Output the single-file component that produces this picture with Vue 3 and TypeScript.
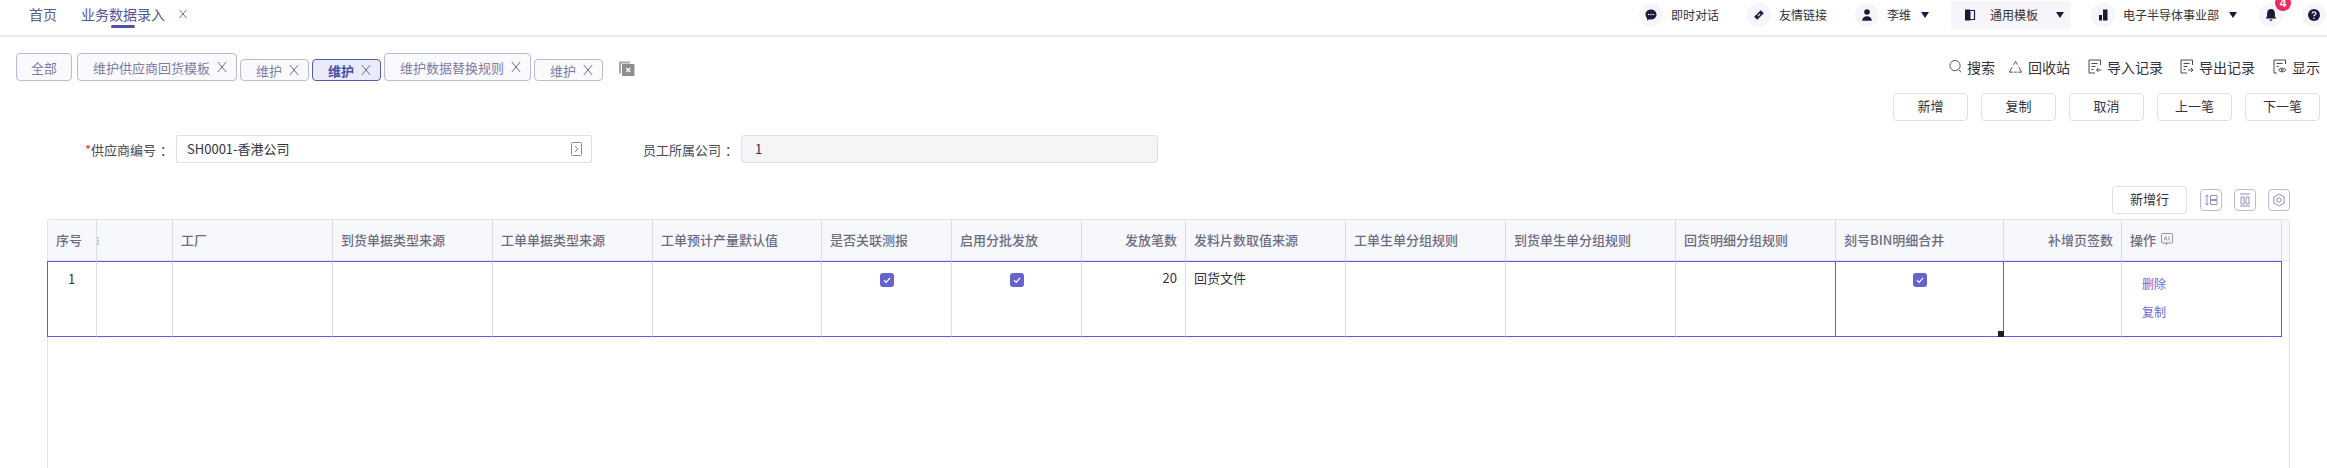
<script setup lang="ts">
type Col = { title: string; width: number; align?: 'right' }

const tags = [
  { label: '维护供应商回货模板', tall: true },
  { label: '维护' },
  { label: '维护', active: true },
  { label: '维护数据替换规则', tall: true },
  { label: '维护' },
]

const actions = ['新增', '复制', '取消', '上一笔', '下一笔']

const columns: Col[] = [
  { title: '序号', width: 49 },
  { title: '', width: 76 },
  { title: '工厂', width: 160 },
  { title: '到货单据类型来源', width: 160 },
  { title: '工单单据类型来源', width: 160 },
  { title: '工单预计产量默认值', width: 169 },
  { title: '是否关联测报', width: 130 },
  { title: '启用分批发放', width: 130 },
  { title: '发放笔数', width: 104, align: 'right' },
  { title: '发料片数取值来源', width: 160 },
  { title: '工单生单分组规则', width: 160 },
  { title: '到货单生单分组规则', width: 170 },
  { title: '回货明细分组规则', width: 160 },
  { title: '刻号BIN明细合并', width: 168 },
  { title: '补增页签数', width: 118, align: 'right' },
  { title: '操作', width: 160 },
]

const gridColumns = columns.map((c) => `${c.width}px`).join(' ') + ' 1fr'
const checked = [6, 7, 13]
</script>

<template>
  <div class="page">
    <header class="topbar">
      <nav class="tabs">
        <span class="tab">首页</span>
        <span class="tab current">业务数据录入</span>
        <svg class="tab-close" width="8" height="10" viewBox="0 0 8 10"><path d="M.5 1l7 8M7.500 1l-7 8" /></svg>
      </nav>
      <div class="user-nav">
        <div class="nav-item pad">
          <span class="nav-icon"><svg width="14" height="14" viewBox="0 0 14 14"><path d="M7 1.500c3.200 0 5.500 2.200 5.500 5s-2.300 5-5.500 5c-.6 0-1.100-.1-1.600-.2L3 12.600l.2-2.400C2.100 9.300 1.500 8 1.500 6.500c0-2.800 2.300-5 5.500-5z" /><circle cx="4.600" cy="6.500" r=".8" fill="#f5f5fa" /><circle cx="7" cy="6.500" r=".8" fill="#f5f5fa" /><circle cx="9.400" cy="6.500" r=".8" fill="#f5f5fa" /></svg></span>
          <span>即时对话</span>
        </div>
        <div class="nav-item pad">
          <span class="nav-icon"><svg width="14" height="14" viewBox="0 0 14 14"><path d="M8.800 2.200l3 3-6.600 6.600-3-3z" /><path d="M5.800 8.200l2.400-2.400" stroke="#f5f5fa" stroke-width="1.200" /></svg></span>
          <span>友情链接</span>
        </div>
        <div class="nav-item caret-end">
          <span class="nav-icon"><svg width="14" height="14" viewBox="0 0 14 14"><circle cx="7" cy="4" r="2.800" /><path d="M2.200 12.800c0-2.800 2-4.500 4.800-4.500s4.800 1.700 4.800 4.500z" /></svg></span>
          <span>李维</span>
          <i class="caret"></i>
        </div>
        <div class="nav-item template">
          <span class="nav-icon plain"><svg width="14" height="14" viewBox="0 0 14 14"><path d="M2 1.500h5.500v11H2z" /><path d="M7.500 2.500h4v9h-4" fill="none" stroke="#1c1a3a" stroke-width="1.200" /></svg></span>
          <span>通用模板</span>
          <i class="caret wide"></i>
        </div>
        <div class="nav-item">
          <span class="nav-icon"><svg width="14" height="14" viewBox="0 0 14 14"><path d="M7 1.500h4.500v11H7zM3 7h3v5.500H3z" /></svg></span>
          <span>电子半导体事业部</span>
          <i class="caret"></i>
        </div>
        <div class="bell-wrap">
          <span class="nav-icon"><svg width="14" height="14" viewBox="0 0 14 14"><path d="M7 1c2.600 0 3.900 2 3.900 4.300v3l1.400 2.200H1.700l1.400-2.200v-3C3.100 3 4.400 1 7 1z" /><path d="M5.400 11.600h3.200c-.2.900-.8 1.400-1.600 1.400s-1.400-.5-1.600-1.400z" /></svg></span>
          <b class="badge">4</b>
        </div>
        <span class="nav-icon help"><svg width="14" height="14" viewBox="0 0 14 14"><circle cx="7" cy="7" r="6" /><path d="M5.100 5.500c.1-1.100.9-1.700 1.900-1.700s1.900.6 1.900 1.600c0 1.400-1.900 1.400-1.900 2.900" fill="none" stroke="#f5f5fa" stroke-width="1.300" /><circle cx="7" cy="10.200" r=".8" fill="#f5f5fa" /></svg></span>
      </div>
    </header>

    <section class="tag-row">
      <div class="tags">
        <span class="tag all">全部</span>
        <span
          v-for="(tag, i) in tags"
          :key="i"
          class="tag"
          :class="{ tall: tag.tall, active: tag.active }"
        >
          {{ tag.label }}
          <svg width="10" height="12" viewBox="0 0 10 12"><path d="M.8 1l8.400 10M9.200 1L.8 11" /></svg>
        </span>
        <svg class="close-all" width="17" height="16" viewBox="0 0 17 16">
          <path d="M1 1.500h11v2H3v10H1z" fill="#a8a8a8" />
          <rect x="4" y="4" width="12.500" height="12" rx="1" fill="#8e8e8e" />
          <path d="M8.300 8l4 4M12.300 8l-4 4" stroke="#fff" stroke-width="1.300" />
        </svg>
      </div>
      <div class="tools">
        <span class="tool">
          <svg width="13" height="15" viewBox="0 0 14 15"><circle cx="6.500" cy="6.500" r="5.500" /><path d="M10.500 10.800l2.500 3" /></svg>
          搜索
        </span>
        <span class="tool">
          <svg width="15" height="14" viewBox="0 0 16 14"><path d="M6 4.500L8 1l2 3.500M4.500 7L1.500 12.500h4M10.500 12.500h4L11.500 7M6.500 12.500h3" /></svg>
          回收站
        </span>
        <span class="tool wide first-wide">
          <svg width="14" height="15" viewBox="0 0 14 15"><path d="M12.500 6V1H1v13h6M3.500 4.500h6M3.500 7.500h4M3.500 10.500h2M13.500 11H8.500M10.500 9l-2 2 2 2" /></svg>
          导入记录
        </span>
        <span class="tool wide">
          <svg width="14" height="15" viewBox="0 0 14 15"><path d="M12.500 6V1H1v13h6M3.500 4.500h6M3.500 7.500h4M3.500 10.500h2M8 11h5M11 9l2 2-2 2" /></svg>
          导出记录
        </span>
        <span class="tool wide first-wide">
          <svg width="14" height="15" viewBox="0 0 14 15"><path d="M12.500 5V1H1v13h3M3.500 4.500h6M3.500 7.500h2M5.500 11c1.500-2.400 6-2.400 7.500 0-1.500 2.400-6 2.400-7.500 0z" /><circle cx="9.200" cy="11" r="1" /></svg>
          显示
        </span>
      </div>
    </section>

    <section class="action-row">
      <button v-for="label in actions" :key="label" type="button" class="btn">{{ label }}</button>
    </section>

    <section class="form-row">
      <label class="field-label first"><em>*</em>供应商编号<span class="colon">：</span></label>
      <div class="input first-input">
        <span>SH0001-香港公司</span>
        <svg width="11" height="14" viewBox="0 0 11 14"><rect x=".5" y=".5" width="10" height="13" rx="1" /><path d="M4 4l3 3-3 3" /></svg>
      </div>
      <label class="field-label second">员工所属公司<span class="colon">：</span></label>
      <div class="input readonly"><span>1</span></div>
    </section>

    <section class="table-tools">
      <button type="button" class="btn add-row">新增行</button>
      <span class="icon-btn"><svg width="14" height="12" viewBox="0 0 14 12"><path d="M3 1v10M1.500 2.500L3 1l1.500 1.500M1.500 9.500L3 11l1.500-1.500M6.500 1.500h6.500v4H6.500zM6.500 6.500h6.500v4H6.500z" /></svg></span>
      <span class="icon-btn"><svg width="12" height="14" viewBox="0 0 12 14"><path d="M1 1h10M1 13h10M2 4h3v7H2zM7 4h3v7H7z" /></svg></span>
      <span class="icon-btn"><svg width="14" height="14" viewBox="0 0 14 14"><path d="M7 1l5.200 3v6L7 13l-5.200-3V4z" /><circle cx="7" cy="7" r="2.200" /></svg></span>
    </section>

    <section class="table">
      <div class="table-row head" :style="{ gridTemplateColumns: gridColumns }">
        <div
          v-for="(col, i) in columns"
          :key="i"
          class="cell"
          :class="{ right: col.align === 'right' }"
        >
          <i v-if="i === 1" class="resize-mark"></i>
          {{ col.title }}
          <svg v-if="col.title === '操作'" class="op-icon" width="12" height="12" viewBox="0 0 12 12"><rect x=".5" y=".5" width="11" height="9.500" rx="1" /><path d="M5 10v1.500L7 10M3 7.500l1.500-4 1.500 4M8 3.500v4" /></svg>
        </div>
        <div class="cell gutter"></div>
      </div>
      <div class="table-row body" :style="{ gridTemplateColumns: gridColumns }">
        <div
          v-for="(col, i) in columns"
          :key="i"
          class="cell"
          :class="{
            right: col.align === 'right',
            selected: i === 13,
            'first-cell': i === 0,
            'last-cell': i === 15,
            centered: checked.includes(i),
          }"
        >
          <template v-if="i === 0"><span class="seq">1</span></template>
          <span v-if="checked.includes(i)" class="check">
            <svg width="10" height="10" viewBox="0 0 10 10"><path d="M2 5.200l2.200 2.200L8 2.800" /></svg>
          </span>
          <template v-if="i === 8">20</template>
          <template v-if="i === 9">回货文件</template>
          <div v-if="i === 15" class="ops">
            <a>删除</a>
            <a>复制</a>
          </div>
          <i v-if="i === 13" class="handle"></i>
        </div>
        <div class="gutter-body"></div>
      </div>
    </section>
  </div>
</template>

<style>
html,
body {
  margin: 0;
  background: #fff;
  overflow: hidden;
}
</style>

<style scoped>
.page {
  width: 2327px;
  height: 468px;
  overflow: hidden;
  display: flex;
  flex-direction: column;
  box-sizing: border-box;
  font-family: "Noto Sans CJK SC", "Liberation Sans", sans-serif;
  font-size: 13px;
  color: #33323e;
}
.topbar {
  height: 37px;
  flex-shrink: 0;
  box-sizing: border-box;
  display: flex;
  justify-content: space-between;
  border-bottom: 2px solid #e9e7f9;
}
.tabs {
  display: flex;
  align-items: center;
  padding-left: 29px;
  height: 28px;
  font-size: 14px;
  color: #5d5b85;
}
.tab {
  margin-right: 24px;
}
.tab.current {
  position: relative;
  margin-right: 14px;
  color: #55539b;
}
.tab.current::after {
  content: '';
  position: absolute;
  left: 30px;
  bottom: -4px;
  width: 24px;
  height: 3px;
  border-radius: 2px;
  background: #5450a8;
}
.tab-close path {
  fill: none;
  stroke: #6f6d95;
  stroke-width: 1;
}
.user-nav {
  display: flex;
  align-items: center;
  gap: 20px;
  padding-right: 1px;
  height: 30px;
  font-size: 12px;
  color: #33323e;
}
.nav-item {
  display: flex;
  align-items: center;
  gap: 8px;
}
.nav-item > span:not(.nav-icon) {
  margin-top: -2px;
}
.nav-item.pad {
  padding-right: 8px;
}
.nav-item.caret-end {
  padding-right: 2px;
}
.nav-item.template {
  height: 28px;
  width: 120px;
  box-sizing: border-box;
  padding-left: 7px;
  background: #f5f5fa;
  border-radius: 4px;
}
.nav-icon {
  width: 24px;
  height: 24px;
  flex-shrink: 0;
  border-radius: 50%;
  background: #f5f5fa;
  display: flex;
  align-items: center;
  justify-content: center;
}
.nav-icon.plain {
  background: transparent;
}
.nav-icon svg {
  fill: #1c1a3a;
}
.caret {
  width: 0;
  height: 0;
  margin-left: 2px;
  border-left: 4px solid transparent;
  border-right: 4px solid transparent;
  border-top: 6px solid #1c1a3a;
}
.caret.wide {
  margin-left: 10px;
}
.bell-wrap {
  position: relative;
  margin-left: 2px;
}
.badge {
  position: absolute;
  top: -8px;
  left: 16px;
  width: 16px;
  height: 16px;
  border-radius: 50%;
  background: #f0285f;
  color: #fff;
  font-family: "Liberation Sans", sans-serif;
  font-size: 12px;
  line-height: 16px;
  text-align: center;
}
.help {
  margin-left: -1px;
}
.tag-row {
  display: flex;
  justify-content: space-between;
  align-items: center;
  margin-top: 16px;
  padding: 0 7px 0 16px;
  height: 28px;
  flex-shrink: 0;
}
.tags {
  display: flex;
  align-items: flex-end;
  height: 28px;
  gap: 3px;
}
.tag {
  box-sizing: border-box;
  height: 22px;
  padding: 0 9px 0 15px;
  display: flex;
  align-items: center;
  gap: 7px;
  background: #fafafc;
  border: 1px solid #b7b8e2;
  border-radius: 4px;
  color: #7d7ba6;
  white-space: nowrap;
}
.tag svg path {
  fill: none;
  stroke: #6f6e7c;
  stroke-width: 1;
}
.tag.all,
.tag.tall {
  height: 28px;
}
.tag.all {
  padding: 0 14px;
  margin-right: 2px;
}
.tag.active {
  background: #e9ebfb;
  border-color: #5a59ad;
  color: #4d4ea6;
  font-weight: 700;
}
.close-all {
  align-self: center;
  margin-left: 12px;
  margin-top: 2px;
}
.tools {
  display: flex;
  align-items: center;
  font-size: 14px;
  color: #33323e;
  margin-top: -1px;
}
.tool {
  display: flex;
  align-items: center;
  gap: 5px;
  margin-left: 13px;
}
.tool.wide {
  margin-left: 17px;
}
.tool.first-wide {
  margin-left: 18px;
}
.tool svg {
  fill: none;
  stroke: #4a4956;
  stroke-width: 1;
}
.action-row {
  display: flex;
  justify-content: flex-end;
  gap: 13px;
  margin-top: 12px;
  padding-right: 7px;
  flex-shrink: 0;
}
.btn {
  box-sizing: border-box;
  width: 75px;
  height: 28px;
  padding: 0 0 3px;
  background: #fff;
  border: 1px solid #dedee3;
  border-radius: 4px;
  font: inherit;
  color: #33323e;
}
.form-row {
  display: flex;
  align-items: center;
  margin-top: 14px;
  height: 28px;
  flex-shrink: 0;
}
.field-label {
  color: #4a4956;
  white-space: nowrap;
  box-sizing: border-box;
}
.field-label em {
  color: #e23a3a;
  font-style: normal;
}
.colon {
  margin-left: 4px;
}
.field-label.first {
  width: 176px;
  padding-left: 85px;
}
.field-label.second {
  width: 149px;
  padding-left: 51px;
}
.input {
  box-sizing: border-box;
  height: 28px;
  display: flex;
  align-items: center;
  justify-content: space-between;
  padding: 0 9px 2px 10px;
  border: 1px solid #dedee3;
  border-radius: 2px;
  color: #33323e;
}
.first-input {
  width: 416px;
}
.first-input svg {
  fill: none;
  stroke: #8c8b96;
  stroke-width: 1;
  margin-top: 2px;
}
.readonly {
  width: 417px;
  padding-left: 13px;
  background: #f5f5f7;
  border-radius: 4px;
}
.table-tools {
  display: flex;
  justify-content: flex-end;
  align-items: center;
  gap: 12px;
  margin-top: 23px;
  padding-right: 37px;
  flex-shrink: 0;
}
.add-row {
  margin-right: 1px;
}
.icon-btn {
  box-sizing: border-box;
  width: 22px;
  height: 22px;
  border: 1px solid #b7b8e2;
  border-radius: 4px;
  display: flex;
  align-items: center;
  justify-content: center;
}
.icon-btn svg {
  fill: none;
  stroke: #8f90bd;
  stroke-width: 1;
}
.table {
  box-sizing: border-box;
  width: 2243px;
  margin: 5px 0 0 47px;
  flex: 1;
  border: 1px solid #e2e2e8;
  border-bottom: none;
  border-radius: 4px 4px 0 0;
}
.table-row {
  display: grid;
}
.cell {
  position: relative;
  box-sizing: border-box;
  padding: 0 8px;
  border-right: 1px solid #dcdce4;
  min-width: 0;
}
.cell.right {
  text-align: right;
}
.head {
  height: 41px;
  background: #f7f8fc;
  font-weight: 500;
  color: #6e6c82;
}
.head .cell {
  display: flex;
  align-items: center;
  padding-bottom: 2px;
  border-bottom: 1px solid #e2e2e8;
}
.head .cell.right {
  justify-content: flex-end;
}
.head .gutter {
  border-right: none;
  padding: 0;
}
.resize-mark {
  position: absolute;
  left: 0;
  top: 17px;
  width: 2px;
  height: 8px;
  background: repeating-linear-gradient(#a8cdf0 0 2px, transparent 2px 3px);
}
.op-icon {
  margin-left: 5px;
  fill: none;
  stroke: #8f90bd;
  stroke-width: 1;
}
.body {
  height: 76px;
  color: #33323e;
}
.body .cell {
  padding-top: 6px;
  line-height: 19px;
  border-top: 1px solid #6a55e0;
  border-bottom: 1px solid #6a55e0;
}
.body .first-cell {
  border-left: 1px solid #6a55e0;
  margin-left: -1px;
}
.body .last-cell {
  border-right: 1px solid #6a55e0;
}
.body .selected {
  border-left: 1px solid #6a55e0;
  border-right: 1px solid #6a55e0;
  margin-left: -1px;
}
.body .centered {
  text-align: center;
}
.seq {
  display: block;
  text-align: center;
  padding-top: 1px;
  padding-right: 1px;
}
.check {
  display: inline-flex;
  align-items: center;
  justify-content: center;
  width: 14px;
  height: 14px;
  margin-top: 5px;
  border-radius: 3px;
  background: #6562cf;
  vertical-align: top;
}
.check svg {
  fill: none;
  stroke: #fff;
  stroke-width: 1.300;
}
.ops {
  display: flex;
  flex-direction: column;
  gap: 9px;
  padding: 6px 0 0 12px;
  font-size: 12px;
  color: #6c66d6;
}
.handle {
  position: absolute;
  right: -1px;
  bottom: -1px;
  width: 6px;
  height: 6px;
  background: #1c1c22;
}
</style>
